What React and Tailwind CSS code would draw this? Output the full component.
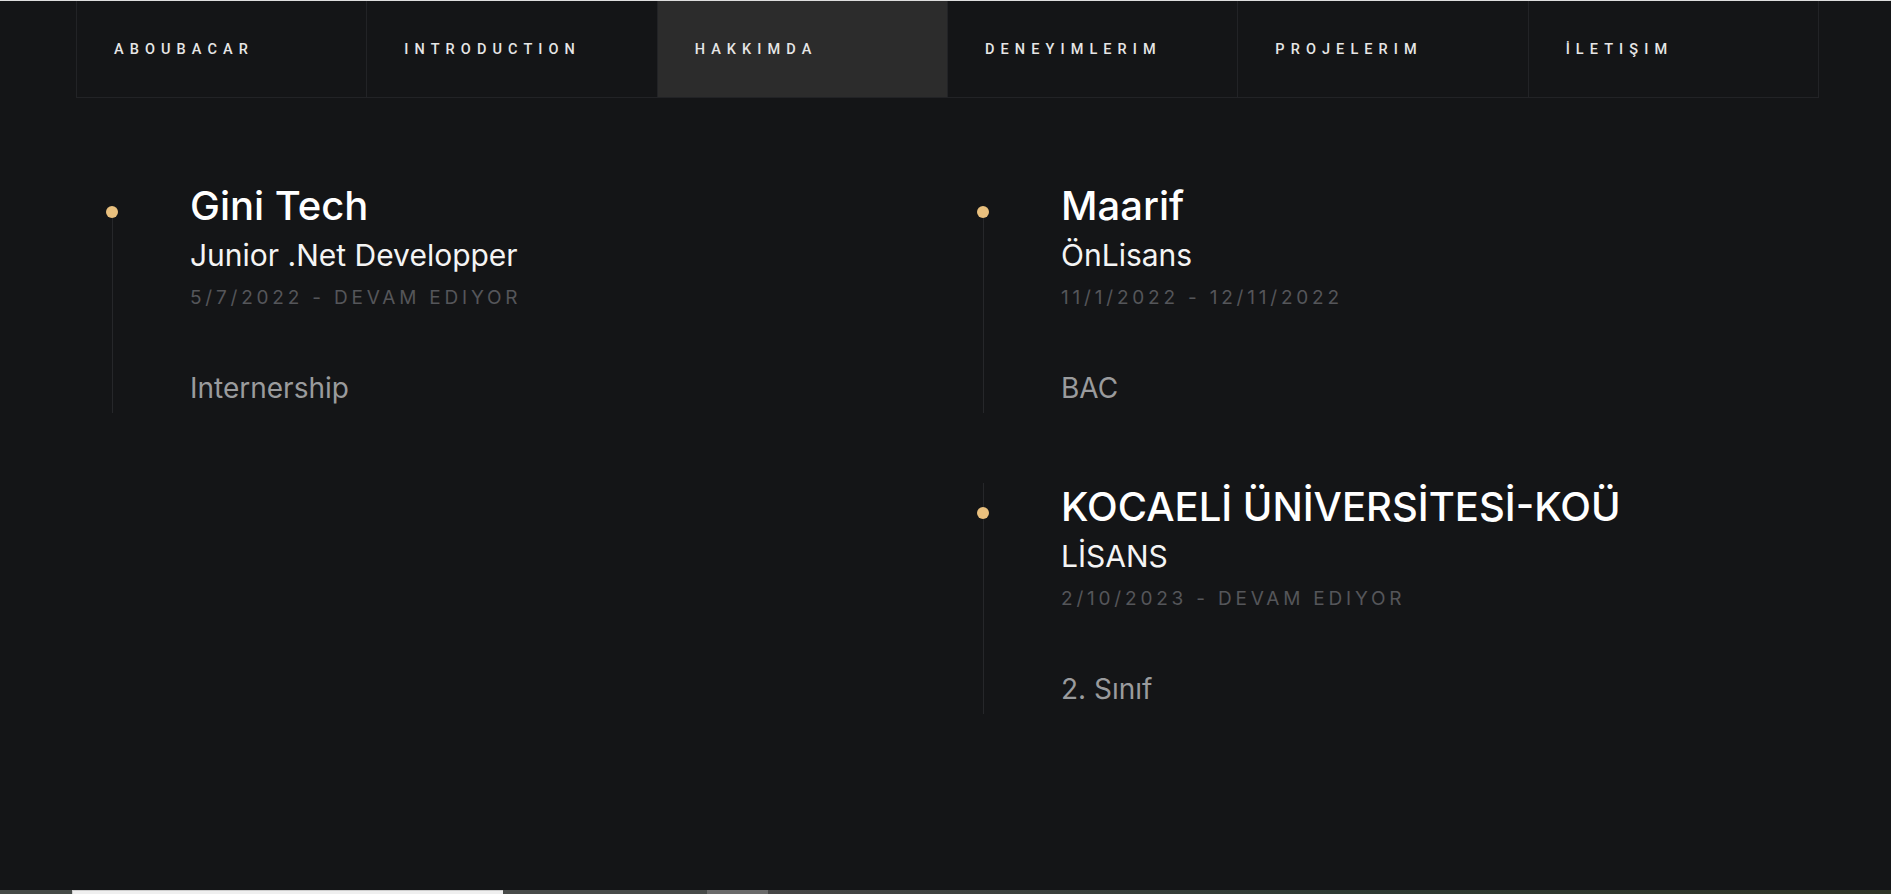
import React from 'react';

const navItems = ['Aboubacar', 'Introduction', 'Hakkımda', 'Deneyimlerim', 'Projelerim', 'İletişim'];

const leftColumn = [
  { title: 'Gini Tech', role: 'Junior .Net Developper', date: '5/7/2022 - DEVAM EDIYOR', text: 'Internership' },
];

const rightColumn = [
  { title: 'Maarif', role: 'ÖnLisans', date: '11/1/2022 - 12/11/2022', text: 'BAC' },
  { title: 'KOCAELİ ÜNİVERSİTESİ-KOÜ', role: 'LİSANS', date: '2/10/2023 - DEVAM EDIYOR', text: '2. Sınıf' },
];

const NAV_LABELS = {
  Aboubacar: 'ABOUBACAR',
  Introduction: 'INTRODUCTION',
  'Hakkımda': 'HAKKIMDA',
  Deneyimlerim: 'DENEYIMLERIM',
  Projelerim: 'PROJELERIM',
  'İletişim': 'İLETIŞIM',
};

const TimelineItem = ({ item, first, last, railOffset }) => (
  <div className={`flex ${last ? '' : 'pb-[70px]'}`}>
    {/* rail: dot + line */}
    <div className={`flex flex-col items-center w-[12px] shrink-0 ${railOffset}`}>
      <div className={`w-px h-[24px] ${first ? 'bg-transparent' : 'bg-[#26272a]'}`}></div>
      <div className="w-[12px] h-[12px] rounded-full bg-[#e9c07e]"></div>
      <div className="w-px flex-1 bg-[#26272a]"></div>
    </div>

    <div className="ml-[72px] pb-[7px]">
      <h3 className="text-[40px] leading-[48px] font-medium text-white whitespace-nowrap">{item.title}</h3>
      <div className="mt-[7px] text-[30px] leading-[36px] text-[#f4f4f4]">{item.role}</div>
      <div className="mt-[13px] text-[19px] leading-[24px] tracking-[0.2em] text-[#55565a]">{item.date}</div>
      <p className="mt-[60px] text-[28px] leading-[36px] text-[#9a9b9d]">{item.text}</p>
    </div>
  </div>
);

export default function App() {
  return (
    <div className="h-[894px] overflow-hidden bg-[#141517] flex flex-col font-['Inter','Liberation_Sans',sans-serif]">
      <div className="h-px bg-[#dedede]"></div>

      {/* top navigation */}
      <nav className="ml-[76px] w-[1743px] grid grid-cols-6 border-l border-b border-[#222326]">
        {navItems.map((name) => (
          <div
            key={name}
            className={`h-[96px] flex items-center pl-[37px] pt-[2px] border-r border-[#222326] ${name === 'Hakkımda' ? 'bg-[#2c2c2c]' : ''}`}
          >
            <span className="font-['Roboto','Liberation_Sans',sans-serif] text-[14.5px] font-medium tracking-[0.42em] text-[#e6e6e6]">
              {NAV_LABELS[name]}
            </span>
          </div>
        ))}
      </nav>

      {/* experience / education timeline */}
      <main className="flex-1 ml-[76px] w-[1743px] grid grid-cols-2 pt-[84px] items-start">
        <div>
          {leftColumn.map((item, i) => (
            <TimelineItem key={item.title} item={item} first={i === 0} last={i === leftColumn.length - 1} railOffset="ml-[30px]" />
          ))}
        </div>
        <div>
          {rightColumn.map((item, i) => (
            <TimelineItem key={item.title} item={item} first={i === 0} last={i === rightColumn.length - 1} railOffset="ml-[29.5px]" />
          ))}
        </div>
      </main>

      {/* bottom strip */}
      <div className="h-[4px] flex">
        <div className="w-[72px] bg-[#454a47]"></div>
        <div className="w-[431px] bg-[#efefef] border-t border-l border-[#cfcfcf]"></div>
        <div className="w-[204px] bg-[#484b49]"></div>
        <div className="w-[61px] bg-[#6b6b6b]"></div>
        <div className="flex-1 bg-linear-to-r from-[#464646] via-[#2e3a33] to-[#2f3527]"></div>
      </div>
    </div>
  );
}
